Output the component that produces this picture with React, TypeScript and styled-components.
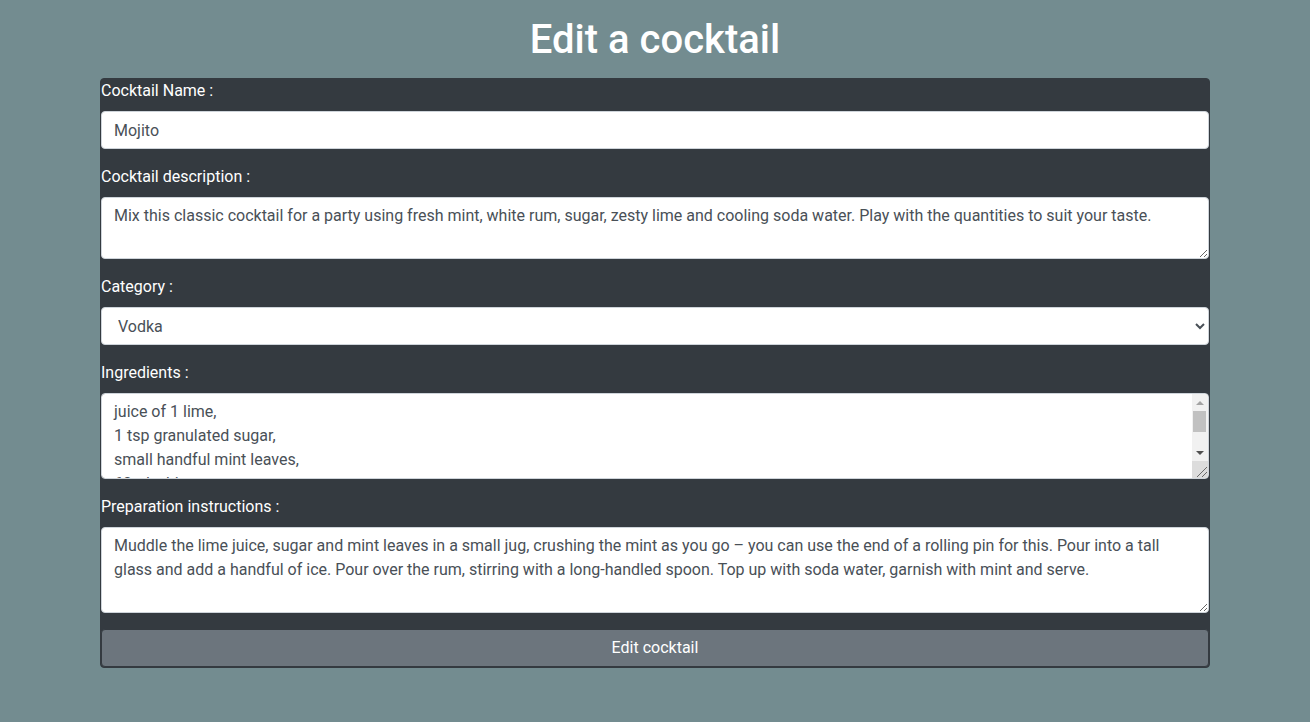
import React from "react";
import styled, { createGlobalStyle } from "styled-components";

const Global = createGlobalStyle`
  html, body { margin: 0; padding: 0; }
  body {
    background: #738c90;
    font-family: Roboto, "Liberation Sans", Arial, sans-serif;
    font-size: 16px;
    line-height: 1.5;
    color: #212529;
  }
  *, *::before, *::after { box-sizing: border-box; }
`;

const Page = styled.div`
  width: 1110px;
  margin: 0 auto;
  padding-top: 16px;
  min-height: 722px;
`;

const Title = styled.h1`
  margin: 0 0 14px;
  font-size: 40px;
  font-weight: 500;
  line-height: 1.2;
  color: #ffffff;
  text-align: center;
`;

const Form = styled.form`
  background: #343a40;
  border: 1px solid #343a40;
  border-radius: 4px;
  display: flex;
  flex-direction: column;
`;

const Group = styled.div`
  display: flex;
  flex-direction: column;
  margin-bottom: 16px;
`;

const Label = styled.label`
  color: #ffffff;
  font-size: 16px;
  line-height: 24px;
  margin-bottom: 8px;
`;

const controlBase = `
  display: block;
  width: 100%;
  padding: 6px 12px;
  font-family: Roboto, "Liberation Sans", Arial, sans-serif;
  font-size: 16px;
  font-weight: 400;
  line-height: 1.5;
  color: #495057;
  background-color: #ffffff;
  border: 1px solid #ced4da;
  border-radius: 4px;
  margin: 0;
  outline: none;
`;

const Input = styled.input`
  ${controlBase}
  height: 38px;
`;

const Select = styled.select`
  ${controlBase}
  height: 38px;
`;

const TextArea = styled.textarea<{ $rows: number }>`
  ${controlBase}
  height: ${(p) => p.$rows * 24 + 14}px;
  resize: vertical;
  overflow: auto;
`;

const ScrollWrap = styled.div`
  position: relative;
`;

const ScrollArea = styled(TextArea)`
  padding-right: 28px;
`;

const Scrollbar = styled.div`
  position: absolute;
  top: 1px;
  right: 1px;
  bottom: 1px;
  width: 16px;
  display: flex;
  flex-direction: column;
  background: #f1f1f1;
  border-top-right-radius: 3px;
  border-bottom-right-radius: 3px;
  overflow: hidden;
  pointer-events: none;
`;

const ArrowBtn = styled.div<{ $dir: "up" | "down" }>`
  height: 16px;
  flex: none;
  display: flex;
  align-items: center;
  justify-content: center;

  &::before {
    content: "";
    width: 0;
    height: 0;
    border-left: 4px solid transparent;
    border-right: 4px solid transparent;
    ${(p) =>
      p.$dir === "up"
        ? "border-bottom: 4px solid #a3a3a3; margin-top: 2px;"
        : "border-top: 4px solid #505050; margin-top: 0;"}
  }
`;

const Track = styled.div`
  flex: 1;
  padding: 1px 2px 0 1px;
`;

const Thumb = styled.div`
  height: 21px;
  background: #c1c1c1;
`;

const Corner = styled.div`
  height: 17px;
  flex: none;
  background: #dcdcdc;
  display: flex;
  align-items: flex-end;
  justify-content: flex-end;
`;

const Button = styled.button`
  display: block;
  width: 100%;
  height: 38px;
  padding: 6px 12px;
  font-family: Roboto, "Liberation Sans", Arial, sans-serif;
  font-size: 16px;
  line-height: 1.5;
  color: #ffffff;
  background: #6c757d;
  border: 1px solid #343a40;
  border-radius: 4px;
  cursor: pointer;
`;

const ingredients = `juice of 1 lime,
1 tsp granulated sugar,
small handful mint leaves,
60ml white rum,
soda water, to top up`;

const description =
  "Mix this classic cocktail for a party using fresh mint, white rum, sugar, zesty lime and cooling soda water. Play with the quantities to suit your taste.";

const instructions =
  "Muddle the lime juice, sugar and mint leaves in a small jug, crushing the mint as you go – you can use the end of a rolling pin for this. Pour into a tall glass and add a handful of ice. Pour over the rum, stirring with a long-handled spoon. Top up with soda water, garnish with mint and serve.";

export default function App() {
  return (
    <>
      <Global />
      <Page>
        <Title>Edit a cocktail</Title>
        <Form onSubmit={(e) => e.preventDefault()}>
          <Group>
            <Label htmlFor="name">Cocktail Name :</Label>
            <Input id="name" defaultValue="Mojito" />
          </Group>
          <Group>
            <Label htmlFor="desc">Cocktail description :</Label>
            <TextArea id="desc" $rows={2} defaultValue={description} />
          </Group>
          <Group>
            <Label htmlFor="cat">Category :</Label>
            <Select id="cat" defaultValue="Vodka">
              <option>Rum</option>
              <option>Vodka</option>
              <option>Gin</option>
              <option>Tequila</option>
            </Select>
          </Group>
          <Group>
            <Label htmlFor="ing">Ingredients :</Label>
            <ScrollWrap>
              <ScrollArea id="ing" $rows={3} defaultValue={ingredients} />
              <Scrollbar aria-hidden="true">
                <ArrowBtn $dir="up" />
                <Track>
                  <Thumb />
                </Track>
                <ArrowBtn $dir="down" />
                <Corner>
                  <svg width="14" height="14" viewBox="0 0 14 14">
                    <line x1="3" y1="13" x2="13" y2="3" stroke="#6a6a6a" strokeWidth="1" />
                    <line x1="8" y1="13" x2="13" y2="8" stroke="#6a6a6a" strokeWidth="1" />
                  </svg>
                </Corner>
              </Scrollbar>
            </ScrollWrap>
          </Group>
          <Group>
            <Label htmlFor="prep">Preparation instructions :</Label>
            <TextArea id="prep" $rows={3} defaultValue={instructions} />
          </Group>
          <Button type="submit">Edit cocktail</Button>
        </Form>
      </Page>
    </>
  );
}
